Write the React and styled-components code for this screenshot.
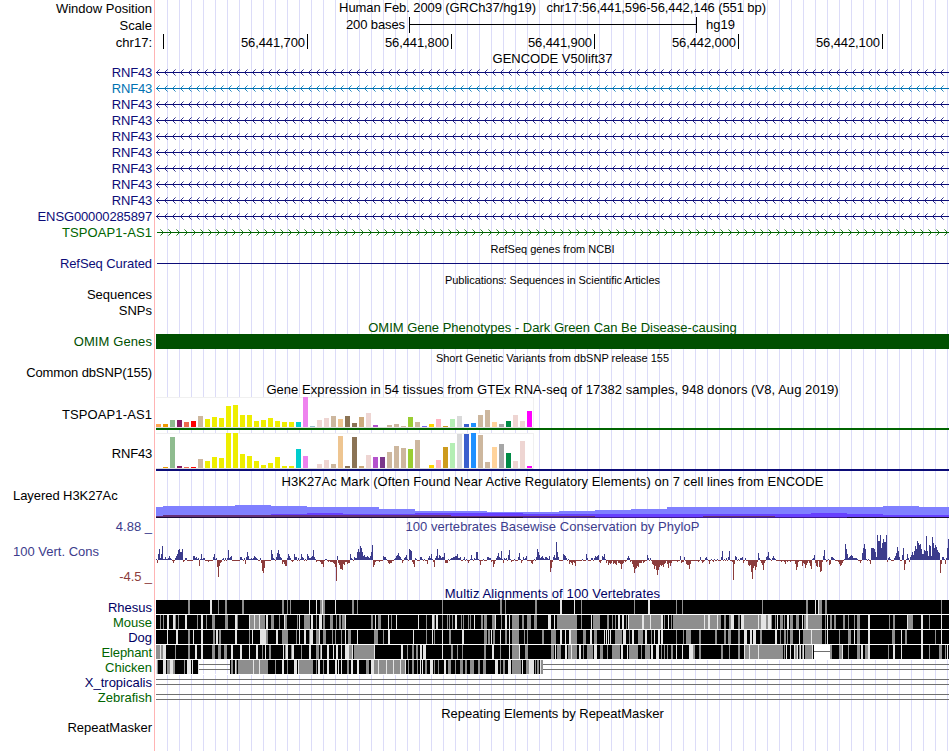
import React from "react";
import styled, { createGlobalStyle } from "styled-components";

const GlobalStyle = createGlobalStyle`
  body { margin: 0; background: #fff; }
`;

const NAVY = "#0c0c78";
const SKY = "#0072b2";
const GREEN = "#006400";
const OMIM = "#005000";
const CONS = "#3c3c8c";
const CONS_NEG = "#8c3c3c";
const LEFT = 156;
const PLOT_WIDTH = 793;

const Browser = styled.main`
  width: 949px;
  height: 751px;
  overflow: hidden;
  font-family: "Liberation Sans", Arial, sans-serif;
  font-size: 13px;
  color: #000;
  background: linear-gradient(#ffb4b4, #ffb4b4) 154px 0 / 1px 100% no-repeat,
    repeating-linear-gradient(to right, #dcdcf8 0 1px, transparent 1px 12px) 167px 0 / 782px 100% no-repeat,
    #fff;
`;

const Row = styled.div`
  display: grid;
  grid-template-columns: 154px ${PLOT_WIDTH}px;
  column-gap: 2px;
  height: ${(p) => p.$h}px;
`;

const Label = styled.div`
  padding-right: 2px;
  padding-left: 13px;
  padding-top: ${(p) => p.$top || 0}px;
  text-align: ${(p) => (p.$left ? "left" : "right")};
  line-height: ${(p) => p.$line || 15}px;
  letter-spacing: ${(p) => p.$spacing || 0}px;
  color: ${(p) => p.$color || "#000"};
  white-space: pre;
`;

const Plot = styled.div`
  min-width: 0;
`;

const Title = styled.div`
  height: ${(p) => p.$h || 15}px;
  line-height: ${(p) => p.$h || 15}px;
  text-align: center;
  font-size: ${(p) => (p.$small ? 11 : 13)}px;
  letter-spacing: ${(p) => p.$spacing || 0}px;
  color: ${(p) => p.$color || "#000"};
  white-space: pre;
`;

const Drawing = styled.svg`
  display: block;
  shape-rendering: crispEdges;
`;

const ScaleLine = styled.div`
  display: flex;
  height: 17px;
  line-height: 16px;
`;

const ScaleCaption = styled.span`
  width: ${(p) => p.$w}px;
  text-align: right;
  padding-right: 4px;
  box-sizing: border-box;
  letter-spacing: -0.1px;
`;

const ScaleBar = styled.div`
  width: 288px;
  height: 16px;
  box-sizing: border-box;
  border: solid #000;
  border-width: 0 1px;
  background: linear-gradient(#000, #000) 0 7px / 100% 1px no-repeat;
  margin-right: 9px;
`;

const Ticks = styled.div`
  display: flex;
`;

const Tick = styled.div`
  box-sizing: border-box;
  width: ${(p) => p.$w}px;
  height: 15px;
  line-height: 17px;
  padding-right: 2px;
  border-right: 1px solid #000;
  text-align: right;
  letter-spacing: -0.1px;
`;

const SolidBar = styled.div`
  height: 15px;
  background: ${OMIM};
`;

const Expression = styled.div`
  box-sizing: border-box;
  height: ${(p) => p.$h}px;
  padding-top: ${(p) => p.$gap}px;
  border-bottom: 2px solid ${(p) => p.$color};
`;

const ExpressionBox = styled.div`
  display: flex;
  align-items: flex-end;
  gap: 2px;
  box-sizing: border-box;
  width: 378px;
  height: 100%;
  background: #fff;
  border: solid #f0f0f0;
  border-width: 1px 1px 0 0;
  box-shadow: inset 0 -1px #dcdcdc;
  padding-bottom: 1px;
`;

const Tissue = styled.div`
  flex: 0 0 5px;
  height: ${(p) => p.$h}px;
  margin-top: -1px;
  background: ${(p) => p.$color};
`;

/* Intron line with strand arrows every eight pixels. */
function Strand({ color, forward }) {
  let near = "";
  let far = "";
  for (let x = forward ? 6 : 1; x < PLOT_WIDTH; x += 8) {
    const s = forward ? -1 : 1;
    for (const k of [1, 2, 3]) {
      const px = x + (k - 1) * s;
      const dots = `M${px} ${7 - k}h1v1h-1zM${px} ${7 + k}h1v1h-1z`;
      if (k === 3) far += dots;
      else near += dots;
    }
  }
  return (
    <Drawing width={PLOT_WIDTH} height="16">
      <path d={`M${forward ? 1 : 0} 7h793v1h-793z`} fill={color} />
      <path d={near} fill={color} fillOpacity="0.85" />
      <path d={far} fill={color} fillOpacity="0.5" />
    </Drawing>
  );
}

const yellow = Array(13).fill("#eeee00");
const tissueColors = [
  "#ffa54f", "#ee9a00", "#8fbc8f", "#8b1c62", "#ee6a50", "#ff0000", "#cdb79e",
  ...yellow,
  "#00cdcd", "#ee82ee", "#9ac0cd", "#eed5d2", "#eed5d2", "#cdb79e", "#eec591",
  "#8b7355", "#8b7355", "#cdaa7d", "#eed5d2", "#b452cd", "#7a378b", "#cdb79e",
  "#cdb79e", "#cdb79e", "#9acd32", "#cdb79e", "#7a67ee", "#ffd700", "#ffb6c1",
  "#cd9b1d", "#b4eeb4", "#d9d9d9", "#3a5fcd", "#1e90ff", "#cdb79e", "#cdb79e",
  "#ffd39b", "#a6a6a6", "#008b45", "#eed5d2", "#eed5d2", "#ff00ff",
];
const tspoap = [3, 3, 7, 7, 5, 6, 11, 8, 10, 9, 21, 22, 12, 12, 6, 7, 9, 6, 5, 5, 5, 30, 1, 7, 9, 11, 8, 11, 4, 10, 14, 2, 0, 2, 3, 1, 10, 5, 1, 3, 8, 1, 8, 11, 3, 4, 12, 17, 5, 3, 6, 12, 6, 16];
const rnf43 = [0, 1, 31, 2, 1, 1, 9, 7, 11, 10, 35, 35, 14, 12, 7, 3, 5, 11, 2, 2, 19, 12, 0, 4, 8, 4, 32, 2, 31, 2, 13, 11, 11, 16, 22, 20, 19, 28, 0, 3, 8, 21, 25, 34, 34, 35, 33, 6, 21, 24, 15, 7, 27, 2];

function Gtex({ values, h, gap, color }) {
  return (
    <Expression $h={h} $gap={gap} $color={color}>
      <ExpressionBox>
        {values.map((v, i) => (
          <Tissue key={i} $h={v} $color={tissueColors[i]} />
        ))}
      </ExpressionBox>
    </Expression>
  );
}

/* Each layer is a list of [start, end, top] steps, in genome-window pixels. */
const histoneLayers = [
  ["#8080ff", [[156, 163, 507], [163, 235, 506], [235, 271, 505], [271, 307, 506], [307, 379, 507], [379, 415, 509], [415, 487, 511], [487, 559, 512], [559, 595, 511], [595, 631, 510], [631, 667, 509], [667, 883, 507], [883, 919, 506], [919, 949, 507]]],
  ["#6640ff", [[271, 307, 514], [307, 343, 513], [343, 415, 514], [415, 523, 513], [523, 811, 514], [811, 847, 513], [847, 883, 514], [883, 949, 515]]],
  ["#663078", [[156, 163, 516], [163, 451, 515], [451, 595, 516], [703, 775, 516]]],
  ["#1c0c38", [[156, 523, 517], [847, 949, 517]]],
  ["#3c1890", [[523, 847, 517]]],
];

function Histone() {
  return (
    <Drawing width={PLOT_WIDTH} height="29">
      {histoneLayers.map(([fill, steps]) =>
        steps.map(([a, b, top]) => (
          <rect key={fill + a} x={a - LEFT} y={top - 489} width={b - a} height={518 - top} fill={fill} />
        ))
      )}
    </Drawing>
  );
}

/* Runs of per-base scores: "start:score,score,..." */
const phyloRuns = `
156:1,-3,6,11,2,6,14,1,1,3,1,1,2,4,2,1,-1,-3,-1,2,4,6,10,11,8,8,11,-2,-1,2,2
193:4,4,2,3,1,2,-6,1,6,1,2,2,-1 208:-2 213:3,6,1,2,-7,-17,-6,-3,-2,1,2,-1,2,-1,2,10,2,3,4
240:3,3,1,-1,2,-4,3,8,4,1,1,2,1,2,4,3,2,1,-1,-1,2,-3,-11,-13,-8
271:10,6,2,1,-1,3,7,10,6,3,2,-4,-2,-4,-6,-6,2,6,4,2,-1,-2,-1,6,3,3,-1,2,-1,1,6,3,2,-1,1,-1,6,4,2,2,3,4,10,3,1,-2
320:-2,-4,-4,-7,-1,1,1,-1,-2,-1,-2,-2,-2,-3,-4,-7,-21,4,-3,-5,-9,-9,-10,-4,-5,-2,-2,-4,-3,-3,6,2,1,-1,3,2,2,8,11,8,14,12,8,4,5,3,3,4,3,2,4,8,15,-7,-5,-2
379:-2,-1,-1,-1,4,3,3,1,-1,-3,-4,-3,-3,-1,-1,1,2,4,5,7,4,3,1,-3,-1,2,3,5,1,-1,11,10,9,-2,-4,-7,2,1,-1,-1
420:3,3,1,-1,1,-1,-1,-4,2,4,2,6,1,-2,-7,2,4,11,2,5,4,2,3,3,7,-3,-3,-3,1,-1,1,2,2,3,3,4,4,6,2,2,3,-1,-1,1,3,-1,1,-1,-3,-1,1,5,1,-1,2,1,8,8,1,-1,-5
483:1 487:3,3,2,2,-2,-1,-7,-4,-1,2,4,7,3,2,9,1,-3,2,1,2,-1,5,10,1,-2 514:1 518:3,7,1,-3,-1,3,1,2,4 531:-3,-4,-1,1,-1,3,11,8,5,2,3,4,2,1,3,3,2,1,4,-12,-8,-2,3,5,2,18,8,3,-1
563:6,5,4,2,-1,1,-4,-2,-3,-5,-2,-3,-6 582:1 586:6,2,-1,-1,-1,2,2,-1,2,4,3,4,5,-2,-3,-1,4,3,6,1,-3,-1,-5,-3,-4,-3,-1,-4,-3,-4,-5,-1,-3,-3,-4,-9,-4,-3,-1,-2,-1,2,4,2,-2,-1,-4,-7,-13,-9,-8,-6,-7,-3,-3,-3,-1,-3,-2,-1,-1,5,2,-1,2,-1,-4,-5,-9,-6,-10,-15,-10,-7,-5,-6,-5,-7,-4,-3,-1,-4,-8,-3,-6,-3
676:-1,-2,-1,-1,4,-3,-2,-2,3,-1,-4,-5,-5,-9,-4 698:-2,-1,3,-1,-3,-2,-1,2,3,1,-1,-4,-1,1,-1,-2,1,-1,-1,1
721:3,9,-1,1,-1,2,-1,3,9,-1,-1,-2,-20,-4,4,3,-1,1,-1,2,2,3,-3,-1,2,-1,-1,-5,-6,-5,-12,-19,-8,-6,-10,-7,-2,7,2,-1,-3,-5,-10,-3,-1,3,4,8,2,1,-1,2,4,2,1
781:-2 784:-2,-4,-1,-2 790:-2 795:-4,-10,-7,-2 802:-6,-3,-4,-8,-5,-3,-1,-3,-6,-9,1,2,5,-3,-6,-7,-1,-7,-12,-11,-2,4,10,1,-2,-1,1,-5,-4,3,3,2,1,-1,-1,-1,-2,-4,-6,-5,-3,-1,1,16,11,6,2,3,4,5,4,2,2,2,2,1
860:-3,-1,7,12,16,11,1,-1,1,-1,-4,12,12,12,11,8,3,26,19,19,26,12,17,21,18,18,25,-2,2,3,1,-1,-1,-1,2,4,7,13,9,3,-1,-1,5,12,-10,-4,1,6,2,-2,3,5,8,5,9,14,11,19,17,15,16,11,6,6,10,9,24,9,4,15,14,4,23,17,12,15,13,10,8,7,-13,-4,3,3,1,-4,2,12,21`;

const phylo = Array(PLOT_WIDTH).fill(-1);
phyloRuns.trim().split(/\s+/).forEach((run) => {
  const [start, list] = run.split(":");
  list.split(",").forEach((v, i) => {
    phylo[+start - LEFT + i] = +v;
  });
});

function PhyloP() {
  const path = (sign) =>
    phylo
      .map((v, i) => (v * sign > 0 ? `M${i} 25h1v${-v}h-1z` : ""))
      .join("");
  return (
    <Drawing width={PLOT_WIDTH} height="50">
      <path d={path(1)} fill={CONS} />
      <path d={path(-1)} fill={CONS_NEG} />
    </Drawing>
  );
}

/* Stripe tokens: shade (g grey, l light), position, optional ".width". */
const alignments = [
  {
    name: "Rhesus",
    color: "#000064",
    stripes: "g188.2 l210.2 g218 g225.2 g242.2 g282.2 g287 g290 l309 l316 g320.2 l322 g323.2 l335 g352.2 g357 g442 g500.2 g505 g535.2 l560.2 l574 g581 g634 l648.2 g676 g682 g762 g806.2 l815 l818 g819.3 g825.2 g941",
  },
  {
    name: "Mouse",
    color: "#006400",
    stripes: "g160 g163 l167.2 l173.2 g175 g178 l185.2 g197 l201.2 g206 g212.3 g225.3 l235.2 g237 l249 g250.4 l254 g255.5 l259 g260.5 l266.2 g271.3 g279 l284 g285.2 g297 l299 g304.6 l311.2 g316 l319.3 g323.2 g330.3 g336 g339.2 g342.3 l345 g371.2 l375 g378.3 l388 g391 l396 l418 g426 l432.2 g434 l436.2 g442 g447 g449 g452 l455.2 g461 g463 g468 g470 l474 g481.2 g484.3 g492.3 l495 g501 l505.2 l509 g512.7 g522.2 g527.4 g534.3 l548.3 l554 g557.20 g581 l591 g593.7 g607.2 g612 g615 l618.2 l622.2 g626 l628 g629.13 l642.2 g644.6 l650 g651.10 l661.2 g664 l668 g671 g673.31 l704 g705.3 l708.2 g710.7 l717 g718.3 g724.2 g729.2 l731.3 g738.2 l741.3 g744.14 l758 g759.2 l761.5 g766.2 l768.3 g771 g775 l777 g780.3 g784 l787.2 g790.3 g796.3 l802 g804.3 l806.2 g808.4 g812.10 g825 l827 g830.2 g834.2 g843.2 g848 g854 g857.3 l868.2 g889 g893.2 l907 g908.5 l921.2 g929 l941",
  },
  {
    name: "Dog",
    color: "#000064",
    stripes: "l167 l176.2 g188.2 l193 l201.2 g213.2 l216.2 g219.2 l235.2 g249 l252 l260.6 g266.2 l276.2 g282.6 g296 l299 l304.2 g309 l310.3 g316.3 l319 g323.3 g332 g335 g341 l345 g348.3 l357 g374.4 g383 l388.2 l413 g426 l432 g434 l442 g449.2 l462.2 g484.3 g488.2 l491 g493.2 l500 g505.2 l509 g512.7 g524 g527 g542.2 g551.5 l560.2 l565 l569.2 g571.6 g583.3 l590.2 g594.3 l604 l606 l608 l610 g615.7 l623.3 g629 l632.2 g638.5 l645.2 g651 l654 l658.2 l661.2 g676 g683 g686.5 g699.2 g715.2 g724.2 g728.3 g738.2 l744.3 l750.2 l753.3 g760.2 l775.2 g780 g784.2 g787 g790.3 l799 g803.8 l811 g812.10 g825 l827 g839 g848.3 l854 g857.3 l868.2 g892.3 l901 g905.2 l921.2 g935 l941",
  },
  {
    name: "Elephant",
    color: "#006400",
    spacing: -0.1,
    stripes: "g156.4 l160 g161.2 l163.3 g175 g188.2 l195.2 l201.2 g212.3 g218.3 g224.3 l231.2 l240.2 l249 l256.2 g262 l265 g269.2 l283 g285 l286.2 g291 l292.2 g301 l309.2 g316.3 g320 l321 l327.2 l333 l336.2 l341 l345.4 g349.3 l352 g354.20 l374 l401.2 g407 g412.2 g416.2 l420.2 l423.3 l442 g451.2 g457 g462 g484.2 l492.2 g500 l509 g512.7 l519 g525.3 g551.3 l555 g557.4 l565.2 g568.3 l571 g572.5 l579.2 g583 g587.6 l594.3 g600.3 g607 g612.8 l621.2 l627 g629.9 g641 g645.5 l651.2 l656.3 g661 g664 g667 g671.2 l676 l682 l689.4 g693.2 g699.2 g721.2 g729 g738.2 l744 g745.38 l749 l758 g784 l786 l790 l794 g795.2 l797 g799 l800 g802 l803 g805.8 l812 g830.2 g839.3 l842 g848 g857.3 l861.2 g865.3 l868.2 g888 l893.2 l901 l921.2 g929 g939.3 g945 l947",
    gap: [814, 830],
  },
  {
    name: "Chicken",
    color: "#006400",
    stripes: "l156 g157 l163.3 g167.3 l170.3 g173.2 g184 l187.4 l192 l198 g231.2 l235 g236 g238.4 g242.11 l253 g254.5 l259 g260.8 g275 l282.2 g287 l294.3 l298 g299.14 g316 l318.2 g323 l327.2 l335.2 l338 l341 g347.2 l351.2 l357.2 g366.3 l371.3 g374.4 l378 g379.7 l386 g387.6 l393 g394.6 l400 g401.4 l405 g408 g412.2 g417 l420 l422 g425.2 l430.3 g434 g438 l444.2 g448.3 g455 g460.3 g465.2 g470.4 g478.2 g483.3 l495.3 g500 g503.2 l508.3 g512.9 l522 g526.3 l529.5 g535 g537.2 l540 g541.2",
    gap: [199, 230],
    end: 543,
  },
  { name: "X_tropicalis", color: "#000064", stripes: "", end: 156 },
  { name: "Zebrafish", color: "#006400", stripes: "", end: 156 },
];

function Alignment({ stripes, gap, end = 949 }) {
  const tokens = stripes ? stripes.split(" ") : [];
  const doubles = [];
  if (gap && end < 949) doubles.push(gap);
  if (end < 949) doubles.push([end, 949]);
  const blocks = gap ? [[LEFT, gap[0]], [gap[1], end]] : [[LEFT, end]];
  return (
    <Drawing width={PLOT_WIDTH} height="15">
      {blocks.map(([a, b]) => (
        <rect key={a} x={a - LEFT} width={b - a} height="14" />
      ))}
      {tokens.map((t, i) => {
        const [x, w = "1"] = t.slice(1).split(".");
        return <rect key={i} x={x - LEFT} width={w} height="14" fill={t[0] === "g" ? "#8e8e8e" : "#e4e4e4"} />;
      })}
      {end > LEFT && <rect y="14" width={end - LEFT} height="1" fill="#fff" />}
      {gap && end === 949 && <rect x={gap[0] - LEFT} y="0" width={gap[1] - gap[0]} height="14" fill="#fff" />}
      {gap && end === 949 && <rect x={gap[0] - LEFT} y="6" width={gap[1] - gap[0]} height="1" fill="#707070" />}
      {doubles.map(([a, b]) => (
        <path key={a} d={`M${a - LEFT} 4h${b - a}v1h-${b - a}zM${a - LEFT} 9h${b - a}v1h-${b - a}z`} fill="#707070" />
      ))}
    </Drawing>
  );
}

const genes = [
  ["RNF43", NAVY, -0.2], ["RNF43", SKY, -0.2], ["RNF43", NAVY, -0.2], ["RNF43", NAVY, -0.2],
  ["RNF43", NAVY, -0.2], ["RNF43", NAVY, -0.2], ["RNF43", NAVY, -0.2], ["RNF43", NAVY, -0.2],
  ["RNF43", NAVY, -0.2], ["ENSG00000285897", NAVY, -0.13], ["TSPOAP1-AS1", GREEN, 0.1],
];

function Track({ h, label, color, line, top, left, spacing, children }) {
  return (
    <Row $h={h}>
      <Label $color={color} $line={line || h} $top={top} $left={left} $spacing={spacing}>{label}</Label>
      <Plot>{children}</Plot>
    </Row>
  );
}

export default function App() {
  return (
    <Browser>
      <GlobalStyle />
      <Track h={17} label="Window Position"><Title $spacing={-0.09}>{"Human Feb. 2009 (GRCh37/hg19)   chr17:56,441,596-56,442,146 (551 bp)"}</Title></Track>
      <Track h={17} label="Scale">
        <ScaleLine><ScaleCaption $w={253}>200 bases</ScaleCaption><ScaleBar /><span>hg19</span></ScaleLine>
      </Track>
      <Track h={16} label="chr17:" line={17}>
        <Ticks>
          <Tick $w={8} />
          <Tick $w={144}>56,441,700</Tick>
          <Tick $w={144}>56,441,800</Tick>
          <Tick $w={143}>56,441,900</Tick>
          <Tick $w={144}>56,442,000</Tick>
          <Tick $w={144}>56,442,100</Tick>
        </Ticks>
      </Track>
      <Track h={15}><Title $h={17}>GENCODE V50lift37</Title></Track>
      {genes.map(([name, color, spacing], i) => (
        <Track key={i} h={16} label={name} color={color} spacing={spacing}><Strand color={color} forward={i === 10} /></Track>
      ))}
      <Track h={15}><Title $small $h={16}>RefSeq genes from NCBI</Title></Track>
      <Track h={16} label="RefSeq Curated" color={NAVY} spacing={-0.08}>
        <Drawing width={PLOT_WIDTH} height="16"><rect x="1" y="7" width="792" height="1" fill={NAVY} /></Drawing>
      </Track>
      <Track h={15}><Title $small $h={16} $spacing={-0.06}>Publications: Sequences in Scientific Articles</Title></Track>
      <Track h={16} label="Sequences" />
      <Track h={16} label="SNPs" />
      <Track h={15}><Title $color={OMIM} $h={17}>OMIM Gene Phenotypes - Dark Green Can Be Disease-causing</Title></Track>
      <Track h={15} label="OMIM Genes" color={OMIM} spacing={0.1}><SolidBar /></Track>
      <Track h={16}><Title $small $h={18}>Short Genetic Variants from dbSNP release 155</Title></Track>
      <Track h={16} label="Common dbSNP(155)" spacing={-0.12} />
      <Track h={16}><Title $h={17} $spacing={0.055}>Gene Expression in 54 tissues from GTEx RNA-seq of 17382 samples, 948 donors (V8, Aug 2019)</Title></Track>
      <Track h={33} label="TSPOAP1-AS1" line={35} spacing={0.1}><Gtex values={tspoap} h={33} gap={0} color={GREEN} /></Track>
      <Track h={43} label="RNF43" line={47} spacing={-0.2}><Gtex values={rnf43} h={41} gap={3} color={NAVY} /></Track>
      <Track h={16}><Title $h={17} $spacing={0.05}>H3K27Ac Mark (Often Found Near Active Regulatory Elements) on 7 cell lines from ENCODE</Title></Track>
      <Track h={29} label="Layered H3K27Ac" line={13} left spacing={-0.06}><Histone /></Track>
      <Row $h={67}>
        <div>
          <Label $color={CONS} $line={18}>4.88 _</Label>
          <Label $color={CONS} $line={16} $top={8} $left>100 Vert. Cons</Label>
          <Label $color={CONS_NEG} $line={16} $top={9} $spacing={-0.1}>-4.5 _</Label>
        </div>
        <Plot><Title $h={17} $color={CONS} $spacing={0.04}>100 vertebrates Basewise Conservation by PhyloP</Title><PhyloP /></Plot>
      </Row>
      <Track h={15}><Title $h={17} $color="#000064" $spacing={0.12}>Multiz Alignments of 100 Vertebrates</Title></Track>
      {alignments.map((a) => (
        <Track key={a.name} h={15} label={a.name} color={a.color} spacing={a.spacing}><Alignment {...a} /></Track>
      ))}
      <Track h={15}><Title $h={17}>Repeating Elements by RepeatMasker</Title></Track>
      <Track h={16} label="RepeatMasker" />
    </Browser>
  );
}
